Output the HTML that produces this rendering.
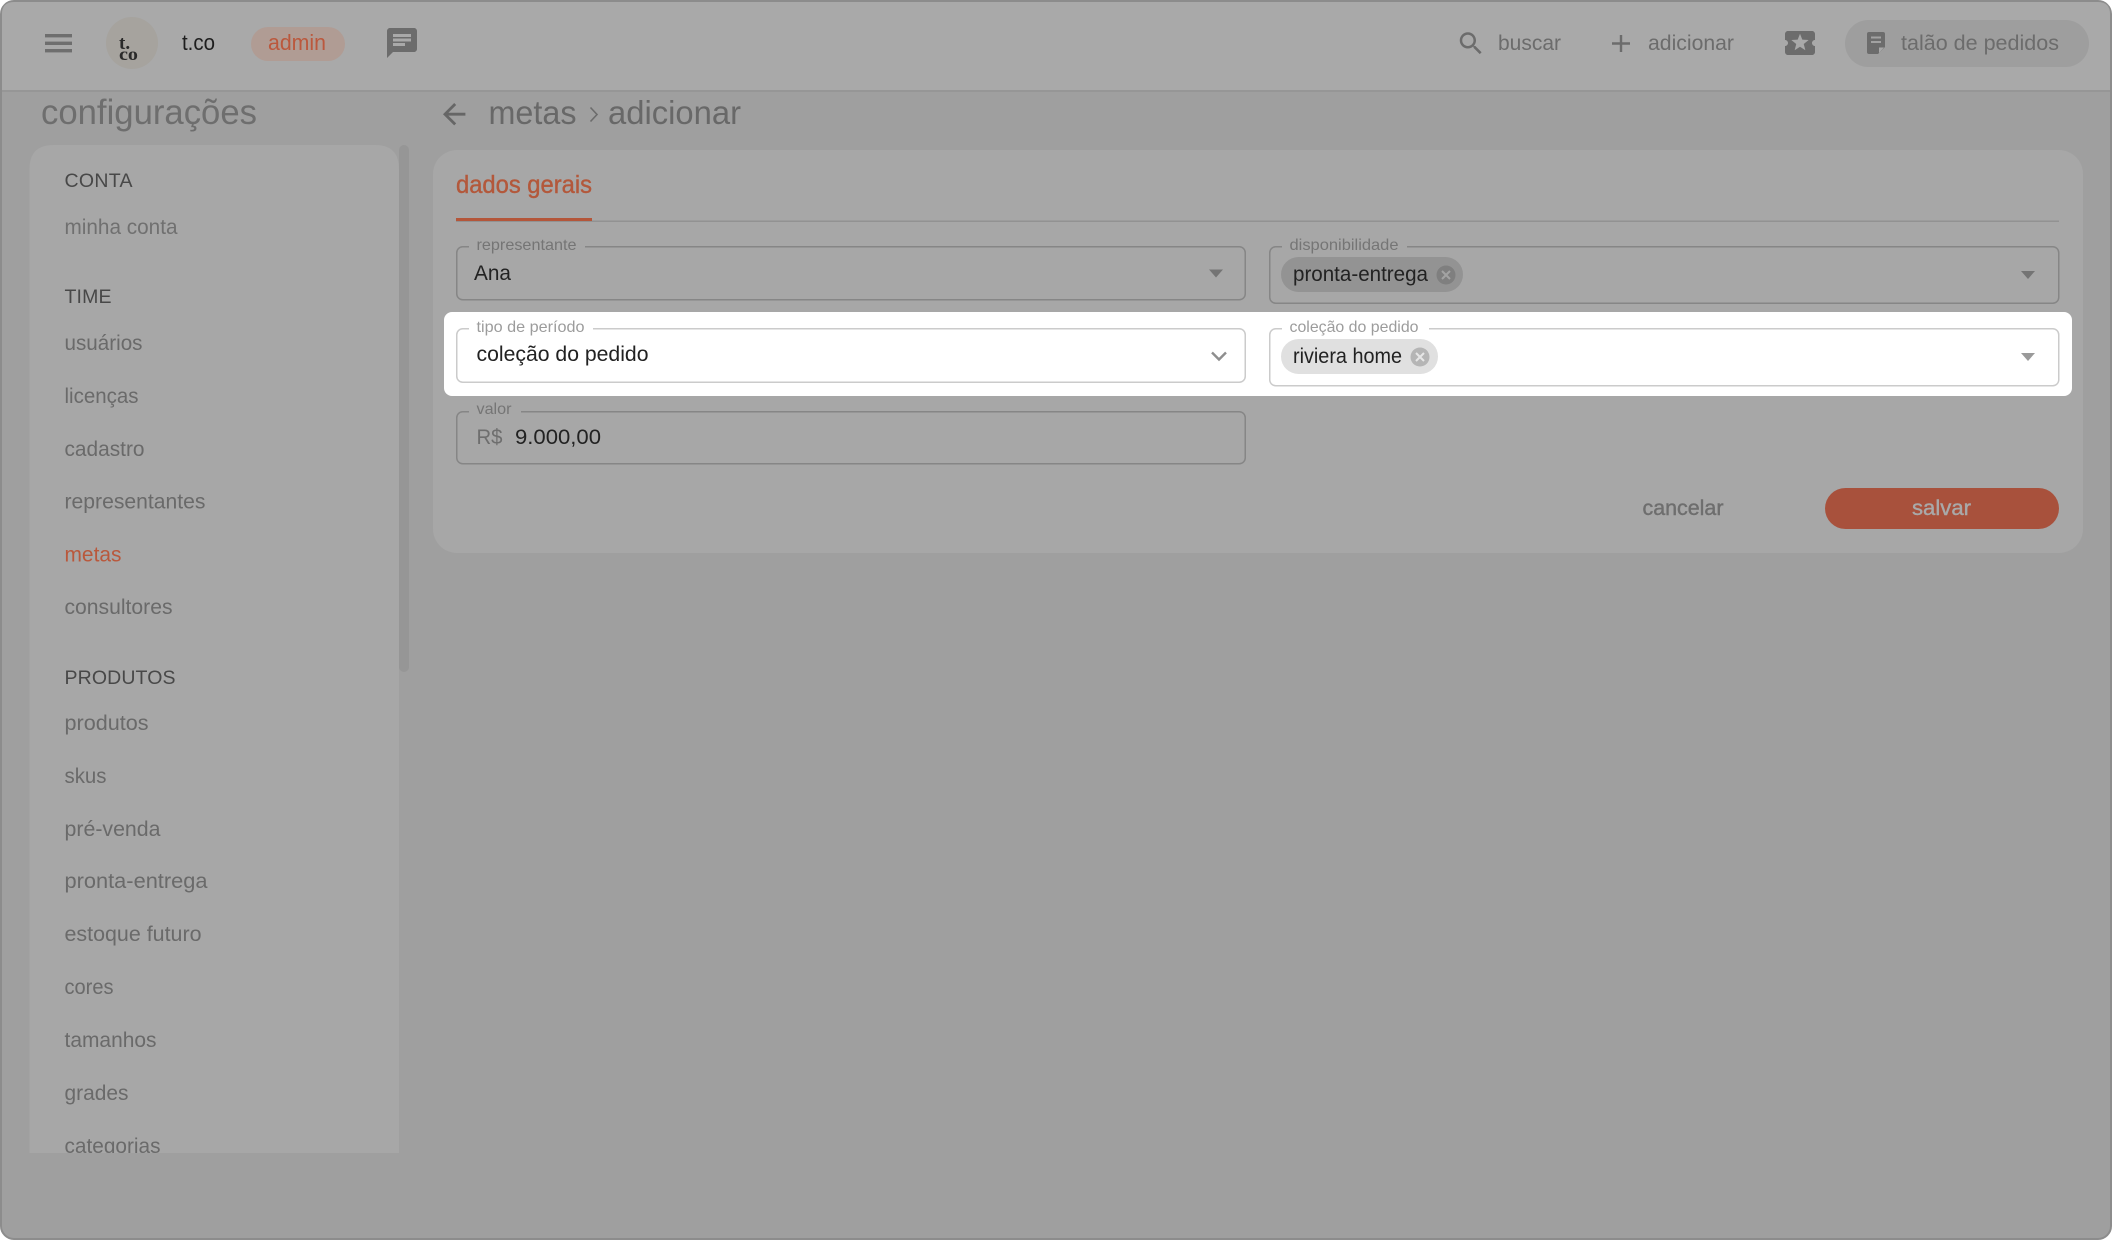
<!DOCTYPE html>
<html lang="pt-BR">
<head>
<meta charset="utf-8">
<title>metas - adicionar</title>
<style>
html,body{margin:0;padding:0;width:2112px;height:1240px;overflow:hidden;background:#fff}
svg{display:block;position:absolute;left:0;top:0}
text{font-family:"Liberation Sans",sans-serif}
.nav{font-size:21px;fill:#6a6a6a}
.sec{font-size:19.5px;fill:#484848}
.leg{font-size:16px;fill:#757575}
.legw{font-size:16px;fill:#9c9c9c}
.val{font-size:21px;fill:#222}
.top{font-size:21px;fill:#6c6c6c}
</style>
</head>
<body>
<svg width="2112" height="1240" viewBox="0 0 2112 1240" xmlns="http://www.w3.org/2000/svg">
  <!-- frame -->
  <rect x="1" y="1" width="2110" height="1238" rx="13" fill="#9f9f9f" stroke="#8c8c8c" stroke-width="2"/>
  <!-- header -->
  <path d="M2 90V14Q2 2 14 2H2098Q2110 2 2110 14V90Z" fill="#a9a9a9"/>
  <rect x="2" y="90" width="2108" height="2" fill="#969696"/>
  <rect x="45" y="34" width="27" height="3.4" fill="#6e6e6e"/>
  <rect x="45" y="41.6" width="27" height="3.4" fill="#6e6e6e"/>
  <rect x="45" y="49" width="27" height="3.4" fill="#6e6e6e"/>
  <circle cx="132" cy="43" r="26" fill="#a6a39e"/>
  <text x="119" y="49" font-size="19" font-weight="700" fill="#2a2a2a" style="font-family:'Liberation Serif',serif">t.</text>
  <text x="119" y="60" font-size="18" font-weight="700" fill="#2a2a2a" textLength="19" lengthAdjust="spacingAndGlyphs" style="font-family:'Liberation Serif',serif">co</text>
  <text x="182" y="50" font-size="22" fill="#1e1e1e" textLength="33" lengthAdjust="spacingAndGlyphs">t.co</text>
  <rect x="251" y="27" width="94" height="34" rx="17" fill="#b09c94"/>
  <text x="268" y="50" font-size="22" fill="#bb583d" textLength="58" lengthAdjust="spacingAndGlyphs">admin</text>
  <path transform="translate(384 25) scale(1.5)" fill="#6c6c6c" d="M20 2H4c-1.1 0-1.99.9-1.99 2L2 22l4-4h14c1.1 0 2-.9 2-2V4c0-1.1-.9-2-2-2zM6 9h12v2H6V9zm8 5H6v-2h8v2zm4-6H6V6h12v2z"/>
  <path transform="translate(1456 28.5) scale(1.25)" fill="#6c6c6c" d="M15.5 14h-.79l-.28-.27C15.41 12.59 16 11.11 16 9.5 16 5.91 13.09 3 9.5 3S3 5.91 3 9.5 5.91 16 9.5 16c1.61 0 3.09-.59 4.23-1.57l.27.28v.79l5 4.99L20.49 19l-4.99-5zm-6 0C7.01 14 5 11.99 5 9.5S7.01 5 9.5 5 14 7.01 14 9.5 11.99 14 9.5 14z"/>
  <text class="top" x="1498" y="50" textLength="63" lengthAdjust="spacingAndGlyphs">buscar</text>
  <path d="M1612 43.5H1630M1621 35V52" stroke="#6c6c6c" stroke-width="2.4" fill="none"/>
  <text class="top" x="1648" y="50" textLength="86" lengthAdjust="spacingAndGlyphs">adicionar</text>
  <path transform="translate(1782 25) scale(1.5)" fill="#6c6c6c" d="M20 12c0-1.1.9-2 2-2V6c0-1.1-.9-2-2-2H4c-1.1 0-1.99.9-1.99 2v4c1.1 0 1.99.9 1.99 2s-.89 2-2 2v4c0 1.1.9 2 2 2h16c1.1 0 2-.9 2-2v-4c-1.1 0-2-.9-2-2zm-4.42 4.8L12 14.5l-3.58 2.3 1.08-4.12-3.29-2.69 4.24-.25L12 5.8l1.54 3.95 4.24.25-3.29 2.69 1.09 4.11z"/>
  <rect x="1845" y="20" width="244" height="47" rx="23.5" fill="#9e9e9e"/>
  <path d="M1869 32H1883Q1885 32 1885 34V47L1878 54H1869Q1867 54 1867 52V34Q1867 32 1869 32Z" fill="#6c6c6c"/>
  <path d="M1871 37.5H1881M1871 42H1881" stroke="#a2a2a2" stroke-width="2"/>
  <path d="M1879 53L1884 47.5H1879Z" fill="#a8a8a8"/>
  <text class="top" x="1901" y="50" textLength="158" lengthAdjust="spacingAndGlyphs">talão de pedidos</text>

  <!-- sidebar -->
  <text x="41" y="124" font-size="35" fill="#6e6e6e" textLength="216" lengthAdjust="spacingAndGlyphs">configurações</text>
  <path d="M29.5 1153V169Q29.5 145 53.5 145H375Q399 145 399 169V1153Z" fill="#a7a7a7"/>
  <rect x="399" y="145" width="10" height="527" rx="5" fill="#969696"/>
  <defs><clipPath id="side"><rect x="29" y="145" width="370" height="1008"/></clipPath></defs>
  <g clip-path="url(#side)">
    <text class="sec" x="64.5" y="187" textLength="68" lengthAdjust="spacing">CONTA</text>
    <text class="nav" x="64.5" y="234" fill-opacity=".9" textLength="113" lengthAdjust="spacingAndGlyphs">minha conta</text>
    <text class="sec" x="64.5" y="303" textLength="47" lengthAdjust="spacing">TIME</text>
    <text class="nav" x="64.5" y="350" textLength="78" lengthAdjust="spacingAndGlyphs">usuários</text>
    <text class="nav" x="64.5" y="403" textLength="74" lengthAdjust="spacingAndGlyphs">licenças</text>
    <text class="nav" x="64.5" y="456" textLength="80" lengthAdjust="spacingAndGlyphs">cadastro</text>
    <text class="nav" x="64.5" y="508.500" textLength="141" lengthAdjust="spacingAndGlyphs">representantes</text>
    <text class="nav" x="64.5" y="561.500" style="fill:#b9583c" textLength="57" lengthAdjust="spacingAndGlyphs">metas</text>
    <text class="nav" x="64.5" y="614" textLength="108" lengthAdjust="spacingAndGlyphs">consultores</text>
    <text class="sec" x="64.5" y="684" textLength="111" lengthAdjust="spacing">PRODUTOS</text>
    <text class="nav" x="64.5" y="730" textLength="84" lengthAdjust="spacingAndGlyphs">produtos</text>
    <text class="nav" x="64.5" y="783" textLength="42" lengthAdjust="spacingAndGlyphs">skus</text>
    <text class="nav" x="64.5" y="836" textLength="96" lengthAdjust="spacingAndGlyphs">pré-venda</text>
    <text class="nav" x="64.5" y="888" textLength="143" lengthAdjust="spacingAndGlyphs">pronta-entrega</text>
    <text class="nav" x="64.5" y="941" textLength="137" lengthAdjust="spacingAndGlyphs">estoque futuro</text>
    <text class="nav" x="64.5" y="994" textLength="49" lengthAdjust="spacingAndGlyphs">cores</text>
    <text class="nav" x="64.5" y="1047" textLength="92" lengthAdjust="spacingAndGlyphs">tamanhos</text>
    <text class="nav" x="64.5" y="1100" textLength="64" lengthAdjust="spacingAndGlyphs">grades</text>
    <text class="nav" x="64.5" y="1153" textLength="96" lengthAdjust="spacingAndGlyphs">categorias</text>
  </g>

  <!-- breadcrumb -->
  <path transform="translate(437.4 97.4) scale(1.4)" fill="#666" d="M20 11H7.83l5.59-5.59L12 4l-8 8 8 8 1.41-1.41L7.83 13H20v-2z"/>
  <text x="488.500" y="124" font-size="33" fill="#686868" textLength="88" lengthAdjust="spacingAndGlyphs">metas</text>
  <path d="M590.500 107.5L597 114.5L590.500 121.5" stroke="#6c6c6c" stroke-width="1.6" fill="none"/>
  <text x="608" y="124" font-size="33" fill="#686868" textLength="133" lengthAdjust="spacingAndGlyphs">adicionar</text>

  <!-- main card -->
  <rect x="433" y="150" width="1650" height="403" rx="24" fill="#a7a7a7"/>
  <text x="456" y="193" font-size="25" fill="#b3583b" stroke="#b3583b" stroke-width=".4" textLength="136" lengthAdjust="spacingAndGlyphs">dados gerais</text>
  <rect x="456" y="220.5" width="1603" height="1.5" fill="#929292"/>
  <rect x="456" y="218" width="136" height="3" fill="#b4563a"/>

  <!-- representante -->
  <rect x="456.75" y="246.75" width="788.5" height="53" rx="6" fill="none" stroke="#868686" stroke-width="1.5"/>
  <rect x="469" y="244" width="116" height="6" fill="#a7a7a7"/>
  <text class="leg" x="476.500" y="250" textLength="100" lengthAdjust="spacingAndGlyphs">representante</text>
  <text class="val" x="474" y="280" textLength="37" lengthAdjust="spacingAndGlyphs">Ana</text>
  <path d="M1209 269.5H1223L1216 277.5Z" fill="#747474"/>

  <!-- disponibilidade -->
  <rect x="1269.75" y="246.75" width="789" height="56.5" rx="6" fill="none" stroke="#868686" stroke-width="1.5"/>
  <rect x="1282" y="244" width="125" height="6" fill="#a7a7a7"/>
  <text class="leg" x="1289.500" y="250" textLength="109" lengthAdjust="spacingAndGlyphs">disponibilidade</text>
  <rect x="1281" y="257" width="182" height="35" rx="17.5" fill="#939393"/>
  <text class="val" x="1293" y="281" font-size="20" textLength="135" lengthAdjust="spacingAndGlyphs">pronta-entrega</text>
  <circle cx="1446" cy="275" r="9.5" fill="#7f7f7f"/>
  <path d="M1442 271L1450 279M1450 271L1442 279" stroke="#a3a3a3" stroke-width="2"/>
  <path d="M2021 271H2035L2028 279Z" fill="#747474"/>

  <!-- valor -->
  <rect x="456.75" y="411.75" width="788.5" height="52" rx="6" fill="none" stroke="#868686" stroke-width="1.5"/>
  <rect x="469" y="409" width="52" height="6" fill="#a7a7a7"/>
  <text class="leg" x="476.500" y="414" textLength="35" lengthAdjust="spacingAndGlyphs">valor</text>
  <text x="476.500" y="444" font-size="21" fill="#6e6e6e" textLength="26" lengthAdjust="spacingAndGlyphs">R$</text>
  <text class="val" x="515" y="444" textLength="86" lengthAdjust="spacingAndGlyphs">9.000,00</text>

  <!-- buttons -->
  <text x="1642.500" y="515" font-size="21" fill="#6e6e6e" stroke="#6e6e6e" stroke-width=".4" textLength="81" lengthAdjust="spacingAndGlyphs">cancelar</text>
  <rect x="1825" y="488" width="234" height="41" rx="20.5" fill="#a8513c"/>
  <text x="1912" y="515" font-size="21" fill="#a9a9a9" stroke="#a9a9a9" stroke-width=".4" textLength="59" lengthAdjust="spacingAndGlyphs">salvar</text>

  <!-- highlighted row -->
  <rect x="444" y="312" width="1628" height="84" rx="8" fill="#fff"/>
  <rect x="456.75" y="328.75" width="788.5" height="53.5" rx="6" fill="none" stroke="#cbcbcb" stroke-width="1.5"/>
  <rect x="469" y="326" width="124" height="6" fill="#fff"/>
  <text class="legw" x="476.500" y="332" textLength="108" lengthAdjust="spacingAndGlyphs">tipo de período</text>
  <text class="val" x="476.500" y="361" textLength="172" lengthAdjust="spacingAndGlyphs">coleção do pedido</text>
  <path d="M1212 352.5L1219 359.5L1226 352.5" stroke="#8e8e8e" stroke-width="2.4" fill="none"/>

  <rect x="1269.75" y="328.75" width="789" height="57" rx="6" fill="none" stroke="#cbcbcb" stroke-width="1.5"/>
  <rect x="1282" y="326" width="147" height="6" fill="#fff"/>
  <text class="legw" x="1289.500" y="332" textLength="129" lengthAdjust="spacingAndGlyphs">coleção do pedido</text>
  <rect x="1281" y="339" width="157" height="35" rx="17.5" fill="#e0e0e0"/>
  <text class="val" x="1293" y="363" font-size="20" textLength="109" lengthAdjust="spacingAndGlyphs">riviera home</text>
  <circle cx="1420" cy="357" r="9.5" fill="#b5b5b5"/>
  <path d="M1416 353L1424 361M1424 353L1416 361" stroke="#e6e6e6" stroke-width="2"/>
  <path d="M2021 353H2035L2028 361Z" fill="#9a9a9a"/>
</svg>
</body>
</html>
